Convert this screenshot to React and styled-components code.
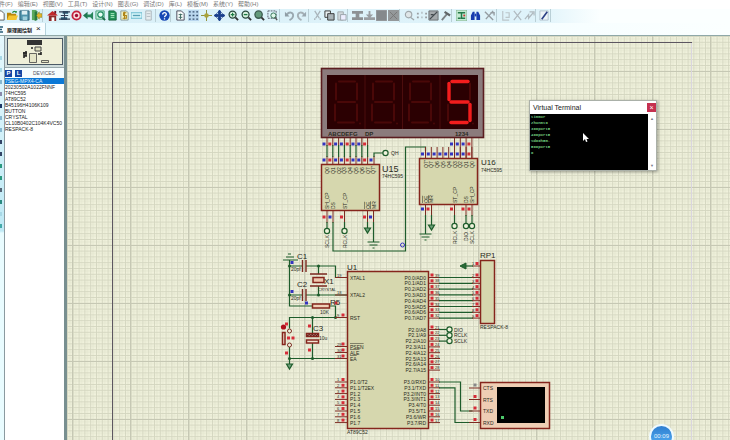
import React from 'react';
import styled, { createGlobalStyle } from 'styled-components';

const GlobalStyle = createGlobalStyle`
  * {
    box-sizing: border-box;
  }

  body {
    margin: 0;
    overflow: hidden;
    font-family: 'Liberation Sans', 'Noto Sans CJK SC', sans-serif;
    font-size: 6px;
    color: #222;
  }

  button {
    font: inherit;
    color: inherit;
    padding: 0;
    border: 0;
    background: none;
  }
`;

const Page = styled.div`
  height: 100vh;
  display: flex;
  flex-direction: column;
  background: #fff;
`;

const MenuBar = styled.nav`
  display: flex;
  gap: 5px;
  height: 9px;
  margin-left: -7px;
  overflow: hidden;
  white-space: nowrap;
`;

const MenuItem = styled.button`
  height: 9px;
  line-height: 9px;
  color: #777;
`;

const Toolbar = styled.div`
  display: flex;
  gap: 3px;
  height: 14px;
  padding-bottom: 1px;
  background: linear-gradient(to right, #d9f0f8 0, #dff3fa 540px, #fbffff 600px);
`;

const ToolGroup = styled.div`
  display: flex;
  align-items: center;
  justify-content: space-around;
  width: ${(props) => props.$width}px;
  flex-shrink: 0;
  border-right: 1px solid #b9cfd6;

  &:first-child {
    margin-left: -6px;
  }
`;

const ToolButton = styled.button`
  display: flex;
  width: 11px;
  height: 12px;
  align-items: center;
  justify-content: center;
`;

const TabBar = styled.div`
  display: flex;
  align-items: stretch;
  height: 13px;
  background: linear-gradient(to right, #e4f9ff, #f2fdff 400px, #fbffff);
  border-bottom: 1px solid #8fa8a8;
`;

const Tab = styled.div`
  display: flex;
  align-items: center;
  gap: 4px;
  width: 46px;
  background: #f7fdff;
  border-right: 1px solid #b4d2dc;
  white-space: nowrap;
  color: #111;
  font-weight: 700;
  font-size: 5px;
`;

const CloseTab = styled.button`
  font-size: 8px;
  font-weight: 400;
  line-height: 8px;
`;

const Body = styled.main`
  flex: 1;
  min-height: 0;
  display: flex;
`;

const ModeStrip = styled.div`
  width: 5px;
  flex-shrink: 0;
  display: flex;
  flex-direction: column;
  background: linear-gradient(#e5f8fd, #bfe9f5 195px, #e9fcff 197px);
  border-right: 1px solid #8b9aa0;
  overflow: hidden;
`;

const ModeButton = styled.button`
  height: 4px;
  width: 2px;
  margin-top: 8px;
  flex-shrink: 0;
  background: ${(props) => props.$tone};
`;

const Sidebar = styled.aside`
  width: 62px;
  flex-shrink: 0;
  border-right: 3px solid #788f90;
  background: #fff;
`;

const Overview = styled.div`
  padding: 2px 1px 1px 2px;
  height: 31px;
  background: #cfdcdc;
`;

const DevicesHeader = styled.div`
  display: flex;
  align-items: center;
  gap: 3px;
  height: 11px;
  background: #f5fcfe;
  border-top: 1px solid #98a8ac;
`;

const PickButton = styled.button`
  width: 7px;
  height: 7px;
  line-height: 7px;
  background: #1546a5;
  color: #fff;
  font-weight: 700;
`;

const DevicesTitle = styled.span`
  margin-left: 8px;
  color: #556;
  font-size: 5px;
`;

const DeviceList = styled.ul`
  margin: 0;
  padding: 0;
  list-style: none;
`;

const Device = styled.li`
  height: 6px;
  line-height: 6px;
  font-size: 5px;
  white-space: nowrap;
  overflow: hidden;
  color: ${(props) => (props.$selected ? '#e8f6ff' : '#222')};
  background: ${(props) => (props.$selected ? '#0b78d6' : 'transparent')};
`;

const Canvas = styled.section`
  position: relative;
  flex: 1;
  min-width: 0;
  overflow: hidden;
`;

const Sheet = styled.svg`
  display: block;
  width: 100%;
  height: 100%;
  font-family: 'Liberation Sans', sans-serif;
`;

const TerminalWindow = styled.div`
  position: absolute;
  left: 462px;
  top: 64px;
  width: 128px;
  background: #fff;
  border: 1px solid #aab0a8;
  box-shadow: 1px 1px 3px rgba(0, 0, 0, 0.35);
`;

const TerminalTitle = styled.div`
  display: flex;
  align-items: center;
  justify-content: space-between;
  height: 13px;
  padding-left: 3px;
  font-size: 7px;
`;

const CloseWindow = styled.button`
  width: 9px;
  height: 9px;
  line-height: 8px;
  background: #c5304f;
  color: #fff;
  font-size: 7px;
`;

const TerminalBody = styled.div`
  display: flex;
  height: 56px;
`;

const TerminalScreen = styled.pre`
  flex: 1;
  margin: 0;
  padding-left: 1px;
  background: #000;
  color: #6fc77d;
  font-family: 'Liberation Mono', monospace;
  font-size: 4px;
  font-weight: 700;
  line-height: 6px;
`;

const ScrollTrack = styled.div`
  display: flex;
  flex-direction: column;
  justify-content: space-between;
  align-items: center;
  width: 8px;
  padding: 2px 0;
  font-size: 4px;
  line-height: 5px;
  color: #778;
`;

const Pointer = styled.svg`
  position: absolute;
  left: 53px;
  top: 32px;
  width: 6px;
  height: 10px;
`;

const TimeBadge = styled.div`
  position: absolute;
  right: 56px;
  bottom: -9px;
  width: 25px;
  height: 25px;
  line-height: 20px;
  border: 2px solid #eefaff;
  border-radius: 50%;
  background: linear-gradient(#2f7fd0, #55b0f5);
  color: #e6f5ff;
  text-align: center;
`;

const MapFrame = styled.svg`
  display: block;
  width: 56px;
  height: 27px;
`;

const menus = [
  '文件(F)',
  '编辑(E)',
  '视图(V)',
  '工具(T)',
  '设计(N)',
  '图表(G)',
  '调试(D)',
  '库(L)',
  '模板(M)',
  '系统(Y)',
  '帮助(H)',
];

const devices = [
  '7SEG-MPX4-CA',
  '20230502A1022FNNF',
  '74HC595',
  'AT89C52',
  'B45196H4106K109',
  'BUTTON',
  'CRYSTAL',
  'CL10B0402C104K4VC50',
  'RESPACK-8',
];

const modeTones = [
  '#e4f4fa', '#a8d8e6', '#a8d8e6', '#88b8d0', '#88a', '#1b3768', '#88b8d0', '#88b8d0', '#346',
  '#346', '#2a9a80', '#2a9a80', '#567', '#2a8a80', '#a8d8e6', '#4aa',
];

const line = (d, color, width = 1.4) => <path d={d} fill="none" stroke={color} strokeWidth={width} />;

// every glyph is drawn on a 12x12 grid
const glyphs = {
  new: <path d="M2 1h5l3 3v7H2z" fill="#fff" stroke="#555" />,
  open: (
    <>
      <path d="M0 3h4l1 1h5v7H0z" fill="#b8860b" />
      <path d="M2 6h10l-2 5H0z" fill="#f4c430" />
      {line('M6 3c1-2 3-2 4 0M10 3V1', '#238a3d')}
    </>
  ),
  save: (
    <>
      <path d="M1 1h10v10H1z" fill="#4f93ab" stroke="#2b5f77" />
      <path d="M3 1h6v4H3z" fill="#dceef2" />
      <path d="M4 7h5v4H4z" fill="#9fd0dd" />
    </>
  ),
  close: (
    <>
      <path d="M1 0h5v11H1z" fill="#5aa85e" />
      <path d="M4 2l3-1v10l-3 1z" fill="#2a7a3c" />
      <path d="M12 4v4H9v2L6 6l3-4v2z" fill="#e4b62a" stroke="#7a7a20" strokeWidth=".6" />
    </>
  ),
  home: (
    <>
      <path d="M2 6h8v6H2z" fill="#8d2a2a" />
      <path d="M0 6l6-5 6 5z" fill="#c3292c" />
      <path d="M8 1h2v3H8z" fill="#712" />
      <path d="M5 8h3v4H5z" fill="#fff" />
    </>
  ),
  schematic: (
    <>
      <path d="M4 1h6v3H4zM2 8h7v3H2z" fill="#275c78" />
      {line('M0 2h12M2 6h8M0 10h12M6 3v6', '#333f55', 1.2)}
    </>
  ),
  pcb: (
    <>
      <circle cx="6" cy="6" r="4.5" fill="#f8dede" stroke="#c4213d" strokeWidth="2" />
      <circle cx="6" cy="6" r="1.8" fill="#a10f35" />
    </>
  ),
  view3d: (
    <>
      <path d="M0 6l5-4v8z" fill="#1f7551" />
      <path d="M4 5h4l3-3v9L8 8H4z" fill="#27865a" />
    </>
  ),
  gerber: (
    <>
      <path d="M1 1h9v9H1z" fill="#c8efdc" stroke="#3b9c72" />
      <circle cx="6" cy="5" r="3" fill="#e9fff5" stroke="#1d8a62" strokeWidth="1.3" />
      {line('M8 8l3 3', '#1d6a4a', 2)}
    </>
  ),
  design: (
    <>
      <path d="M2 1h6l2 2v8H2z" fill="#23935a" stroke="#17643d" />
      {line('M4 4h4M4 6h4M4 8h4', '#b7f0c9', 1)}
    </>
  ),
  bom: (
    <>
      <path d="M2 1h6l2 2v8H2z" fill="#eef0c4" stroke="#899" />
      {line('M8 3H5v3h3v3H4M6 2v8', '#b08518', 1.3)}
    </>
  ),
  code: (
    <>
      <path d="M0 3h12v6H0z" fill="#d8f6fa" stroke="#63b6cc" />
      {line('M2 6h8', '#58a0b6', 1.5)}
    </>
  ),
  note: (
    <>
      <path d="M3 1h6v10H3z" fill="#e6edf0" stroke="#aab5ba" />
      {line('M4 4h4M4 7h4', '#b0bac0', 1)}
    </>
  ),
  help: (
    <>
      <circle cx="6" cy="6" r="5.6" fill="#1747b4" />
      {line('M4 5c0-3 4-3 4 0c0 1-2 1-2 3M6 9v1.3', '#fff')}
    </>
  ),
  redraw: (
    <>
      <path d="M2 1h5l3 3v7H2z" fill="#f6fafa" stroke="#445" />
      {line('M4 5h4M4 8h4M6 4v6', '#3b6a60', 1)}
    </>
  ),
  grid: (
    <>
      <path d="M0 0h12v12H0z" fill="#b9d6ee" />
      <path d="M1 2h10M1 6h10M1 10h10" stroke="#37506f" strokeWidth="1.5" strokeDasharray="2 2" />
    </>
  ),
  origin: (
    <>
      {line('M6 0v12M0 6h12', '#8c8a2d', 1)}
      <circle cx="6" cy="6" r="2.5" fill="#a9a23a" />
    </>
  ),
  pan: <path d="M6 0l2 3H7v2h2V4l3 2-3 2V7H7v2h1l-2 3-2-3h1V7H3v1L0 6l3-2v1h2V3H4z" fill="#1b3f8c" stroke="#1b3f8c" />,
  zoomIn: (
    <>
      <circle cx="5" cy="5" r="3.8" fill="#d8f0df" stroke="#27463b" strokeWidth="1.4" />
      {line('M3 5h4M5 3v4', '#1b7a42', 1.2)}
      {line('M8 8l3 3', '#333', 2)}
    </>
  ),
  zoomOut: (
    <>
      <circle cx="5" cy="5" r="3.8" fill="#d8f0df" stroke="#27463b" strokeWidth="1.4" />
      {line('M3 5h4', '#1b7a42')}
      {line('M8 8l3 3', '#333', 2)}
    </>
  ),
  zoomAll: (
    <>
      <circle cx="5" cy="5" r="4" fill="#649a7c" stroke="#3b5a4e" strokeWidth="1.4" />
      {line('M8 8l3 3', '#333', 2)}
    </>
  ),
  zoomArea: (
    <>
      <path d="M1 1h9v8H1z" fill="none" stroke="#556" strokeDasharray="2 1" />
      <circle cx="7" cy="6" r="2.8" fill="#dff5e8" stroke="#2d6d50" />
      {line('M9 8l2 3', '#555', 1.6)}
    </>
  ),
  undo: (
    <>
      {line('M3 5c3-4 7-2 7 1c0 3-2 4-4 5', '#9aa8b0', 2)}
      <path d="M1 2v5h5z" fill="#8f9ea6" />
    </>
  ),
  redo: (
    <>
      {line('M9 5C6 1 2 3 2 6c0 3 2 4 4 5', '#a5b0b6', 2)}
      <path d="M11 2v5H6z" fill="#9aa8b0" />
    </>
  ),
  cut: line('M3 1l5 8M9 1L4 9M3 9v2M9 9v2', '#a9b4ba'),
  copy: (
    <>
      <path d="M1 1h6v7H1z" fill="#e8eef0" stroke="#333" />
      <path d="M4 4h7v7H4z" fill="#aab4b8" stroke="#333" />
    </>
  ),
  paste: (
    <>
      <path d="M2 2h6v9H2z" fill="#d0d8dc" stroke="#a0a8ac" />
      <path d="M5 5h6v6H5z" fill="#eef" stroke="#98a2a8" />
    </>
  ),
  blockCopy: <path d="M0 1h12v3H8v4h4v3H0V8h4V4H0z" fill="#8d9194" />,
  blockMove: <path d="M0 8h12v3H0zM5 1h2v4h3L6 9 2 5h3z" fill="#9a9ea2" />,
  blockRotate: <path d="M0 0h12v12H0z" fill="#85898c" stroke="#a5a9ac" />,
  blockDelete: (
    <>
      <path d="M0 0h12v12H0z" fill="#94989a" />
      {line('M2 2l8 8M10 2l-8 8', '#777', 1)}
    </>
  ),
  pick: (
    <>
      <circle cx="5" cy="5" r="3.5" fill="#dfe6e8" stroke="#a0a8ac" strokeWidth="1.3" />
      {line('M7 8l4 3', '#a0a8ac')}
    </>
  ),
  make: line('M1 4h2M1 8h2M6 3h1M6 8h1M10 4h2M10 8h2', '#9a9ea2', 2),
  pack: (
    <>
      <path d="M1 1h10v10H1z" fill="#a4a9ac" stroke="#6a7074" />
      {line('M2 10l8-8M3 5h3', '#444b4f')}
    </>
  ),
  hammer: (
    <>
      {line('M2 11l6-7', '#7c8286', 2)}
      {line('M5 2l6 4', '#606568', 2.4)}
    </>
  ),
  wire: (
    <>
      <path d="M0 0h12v12H0z" fill="#c4ead2" stroke="#7faf8e" />
      {line('M2 3h4v6h4M6 3h4M2 9h3', '#24794a', 1.6)}
      {line('M9 5v2', '#c33', 2)}
    </>
  ),
  find: (
    <>
      <path d="M1 11V6l2-4h2v9zM7 11V2h2l2 4v5z" fill="#173cae" />
      <path d="M5 4h2v3H5z" fill="#173cae" />
    </>
  ),
  property: line('M1 2l9 9M10 1L2 10M7 3h4v3', '#959da2', 1.5),
  newSheet: line('M3 1v10h7M6 3h4v5H6', '#bcc6ca', 1.3),
  delSheet: line('M2 1l8 10M10 1L2 11', '#b0babf', 1.3),
  exitSheet: line('M1 10l4-5v4l5-6M6 2h5v4', '#b0babf', 1.3),
  erc: (
    <>
      <path d="M1 1h9v10H1z" fill="#eef4f8" stroke="#b2c2cc" />
      {line('M3 10l6-8', '#2c3f85', 1.8)}
    </>
  ),
};

const toolGroups = [
  { width: 49, tools: ['new', 'open', 'save', 'close'] },
  { width: 110, tools: ['home', 'schematic', 'pcb', 'view3d', 'gerber', 'design', 'bom', 'code', 'note'] },
  { width: 12, tools: ['help'] },
  { width: 106, tools: ['redraw', 'grid', 'origin', 'pan', 'zoomIn', 'zoomOut', 'zoomAll', 'zoomArea'] },
  { width: 26, tools: ['undo', 'redo'] },
  { width: 36, tools: ['cut', 'copy', 'paste'] },
  { width: 49, tools: ['blockCopy', 'blockMove', 'blockRotate', 'blockDelete'] },
  { width: 49, tools: ['pick', 'make', 'pack', 'hammer'] },
  { width: 42, tools: ['wire', 'find', 'property'] },
  { width: 36, tools: ['newSheet', 'delSheet', 'exitSheet'] },
  { width: 12, tools: ['erc'] },
];

const RED = '#d62c38';
const BLUE = '#3434c0';
const WIRE = '#1d5c2b';
const PIN = '#7c2a22';
const BODY = '#d6d7ae';
const INK = '#2b2b22';

const Wire = ({ d }) => <path d={d} fill="none" stroke={WIRE} strokeWidth="1.2" />;
const Pin = ({ d }) => <path d={d} fill="none" stroke={PIN} />;
const Dot = ({ x, y, color = RED }) => <rect x={x - 1.5} y={y - 1.5} width="3" height="3" fill={color} />;
const Node = ({ x, y }) => <circle cx={x} cy={y} r="1.5" fill={WIRE} />;
const Port = ({ x, y }) => <circle cx={x} cy={y} r="2.6" fill="#eff2dc" stroke={WIRE} strokeWidth="1.2" />;
const Chip = ({ x, y, w, h, fill = BODY }) => (
  <rect x={x} y={y} width={w} height={h} fill={fill} stroke="#85251c" strokeWidth="1.5" />
);
const Txt = ({ x, y, size = 5, children, ...rest }) => (
  <text x={x} y={y} fontSize={size} fill={INK} {...rest}>
    {children}
  </text>
);
const VTxt = ({ x, y, children, ...rest }) => (
  <text transform={`translate(${x + 2} ${y}) rotate(-90)`} fontSize="5" fill={INK} {...rest}>
    {children}
  </text>
);
const Arrow = ({ x, y }) => (
  <path d={`M${x - 3} ${y}h6l-3 5z`} fill="#6ea07a" stroke={WIRE} strokeWidth="1.2" />
);
const Ground = ({ x, y }) => (
  <path d={`M${x - 6} ${y}h12M${x - 4} ${y + 3}h8M${x - 1} ${y + 6}h2`} stroke={WIRE} fill="none" />
);

const pitch = 5.8;
const steps = (n) => Array.from({ length: n }, (_, i) => i);

const segments = {
  a: 'M5 0H21',
  b: 'M23 2V18',
  c: 'M23 23V39',
  d: 'M4 41H20',
  e: 'M1 23V39',
  f: 'M2 2V18',
  g: 'M4 20.5H21',
};

const Digit = ({ x, lit = '' }) => (
  <g transform={`translate(${x} 81.5)`} strokeLinecap="round" fill="none">
    {Object.keys(segments).map((key) => (
      <path
        key={key}
        d={segments[key]}
        stroke={lit.includes(key) ? '#f21d1d' : '#4a0808'}
        strokeWidth={lit.includes(key) ? 3.4 : 2}
      />
    ))}
    <circle cx="26" cy="42" r="1" fill="#4a0808" />
  </g>
);

const Display = () => (
  <g>
    <rect x="321.5" y="68.5" width="162" height="69" fill="#8b7b7c" stroke="#5b1d20" strokeWidth="1.6" />
    <rect x="327" y="75" width="151" height="54" fill="#2b0002" />
    <path d="M365 75v54M402.5 75v54M440 75v54" stroke="#4c0d0d" />
    <Digit x={334} />
    <Digit x={371} />
    <Digit x={408} />
    <Digit x={447} lit="afgcd" />
    <Txt x={328} y={136} size={6} fontWeight="700">
      ABCDEFG
    </Txt>
    <Txt x={365} y={136} size={6} fontWeight="700">
      DP
    </Txt>
    <Txt x={455} y={136} size={6} fontWeight="700">
      1234
    </Txt>
    {steps(8).map((i) => (
      <g key={i}>
        <Pin d={`M${327 + i * pitch} 138v8m0 10v8`} />
        <Wire d={`M${327 + i * pitch} 145v12`} />
        <Dot x={324 + i * pitch} y={144} color={[1, 4, 7].includes(i) ? RED : BLUE} />
        <Dot x={324 + i * pitch} y={160} color={[1, 4, 7].includes(i) ? RED : BLUE} />
      </g>
    ))}
    {steps(4).map((i) => (
      <g key={i}>
        <Pin d={`M${454.5 + i * pitch} 138v20`} />
        <Dot x={451.5 + i * pitch} y={144} color={i === 3 ? RED : BLUE} />
      </g>
    ))}
  </g>
);

const outputs = ['Q0', 'Q1', 'Q2', 'Q3', 'Q4', 'Q5', 'Q6', 'Q7', "Q7'"];

const ShiftRegisters = () => (
  <g>
    <Chip x={321.5} y={164.5} w={58} h={46} />
    {outputs.map((name, i) => (
      <VTxt key={name} x={327 + i * pitch} y={174}>
        {name}
      </VTxt>
    ))}
    <Pin d="M374 164v-8" />
    <Wire d="M374 157v-4h9" />
    <Dot x={371} y={160} color={BLUE} />
    <Port x={385.5} y={153} />
    <Txt x={391} y={155}>QH</Txt>
    <VTxt x={327} y={209}>SH_CP</VTxt>
    <VTxt x={333} y={209}>DS</VTxt>
    <VTxt x={344.5} y={209}>ST_CP</VTxt>
    <VTxt x={367.5} y={209} textDecoration="overline">OE</VTxt>
    <VTxt x={373.5} y={209} textDecoration="overline">MR</VTxt>
    <Pin d="M327 211v12M333 211v12M344.5 211v12M367.5 211v12M373.5 211v12" />
    <Wire d="M327 222v7M344.5 222v7M367.5 222v6M373.5 222v20M333 222v29h72.5V147h20v4" />
    {[324, 330, 341.5, 364.5, 370.5].map((x, i) => (
      <Dot key={x} x={x} y={217} color={i === 1 || i === 4 ? BLUE : RED} />
    ))}
    <Port x={327} y={231} />
    <Port x={344.5} y={231} />
    <VTxt x={327} y={248}>SCLK</VTxt>
    <VTxt x={344.5} y={248}>RCLK</VTxt>
    <Arrow x={367.5} y={228} />
    <Ground x={373.5} y={242} />
    <circle cx="402.5" cy="245" r="2" fill="none" stroke={BLUE} />
    <Txt x={382} y={172} size={9}>U15</Txt>
    <Txt x={382} y={178}>74HC595</Txt>

    <Chip x={419.5} y={158.5} w={58} h={46} />
    {outputs.map((name, i) => (
      <g key={name}>
        <VTxt x={425.5 + i * pitch} y={168}>
          {outputs[8 - i]}
        </VTxt>
        <Pin d={`M${425.5 + i * pitch} 158v-11`} />
        <Dot x={422.5 + i * pitch} y={154} color={i > 7 ? RED : BLUE} />
      </g>
    ))}
    <VTxt x={425.5} y={203} textDecoration="overline">OE</VTxt>
    <VTxt x={431} y={203} textDecoration="overline">MR</VTxt>
    <VTxt x={454.5} y={203}>ST_CP</VTxt>
    <VTxt x={466} y={203}>DS</VTxt>
    <VTxt x={472} y={203}>SH_CP</VTxt>
    <Pin d="M425.5 205v11M431.5 205v11M454.5 205v11M466 205v11M472 205v11" />
    <Wire d="M425.5 215v19M431.5 215v10M454.5 215v9M466 215v9M472 215v9" />
    {[422.5, 428, 451.5, 463, 469].map((x, i) => (
      <Dot key={x} x={x} y={209} color={i === 0 ? BLUE : RED} />
    ))}
    <Port x={454.5} y={226} />
    <Port x={466} y={226} />
    <Port x={472} y={226} />
    <VTxt x={454.5} y={244}>RCLK</VTxt>
    <VTxt x={466} y={241}>DIO</VTxt>
    <VTxt x={472} y={244}>SCLK</VTxt>
    <Arrow x={431.5} y={225} />
    <Ground x={425.5} y={234} />
    <Txt x={481} y={165} size={8}>U16</Txt>
    <Txt x={481} y={172}>74HC595</Txt>
  </g>
);

const leftPins = [
  ['XTAL1', 277.5, 19],
  ['XTAL2', 295, 18],
  ['RST', 317.5, 9],
  ['PSEN', 346.5, 29, true],
  ['ALE', 352.5, 30, true],
  ['EA', 358.5, 31, true],
  ...['P1.0/T2', 'P1.1/T2EX', 'P1.2', 'P1.3', 'P1.4', 'P1.5', 'P1.6', 'P1.7'].map((n, i) => [
    n,
    382 + i * pitch,
    i + 1,
  ]),
];

const rightPins = [
  ...steps(8).map((i) => [`P0.${i}/AD${i}`, 277.5 + i * pitch, 39 - i]),
  ...steps(8).map((i) => [`P2.${i}/A${8 + i}`, 329.5 + i * pitch, 21 + i]),
  ...['RXD', 'TXD', 'INT0', 'INT1', 'T0', 'T1', 'WR', 'RD'].map((n, i) => [`P3.${i}/${n}`, 382 + i * pitch, 10 + i]),
];

const Controller = () => (
  <g>
    <Chip x={347.5} y={271.5} w={81} h={157} />
    <Txt x={347} y={270} size={8}>U1</Txt>
    <Txt x={347} y={434}>AT89C52</Txt>
    {leftPins.map(([name, y, num, over], i) => (
      <g key={name}>
        <Pin d={`M335 ${y}h12`} />
        {i > 2 && <Dot x={343} y={y - 2.5} />}
        <Txt x={337} y={y - 1} size={4}>{num}</Txt>
        <Txt x={350} y={y + 2} textDecoration={over ? 'overline' : undefined}>
          {name}
        </Txt>
      </g>
    ))}
    {rightPins.map(([name, y, num]) => (
      <g key={name}>
        <Pin d={`M429 ${y}h11`} />
        <Dot x={432} y={y - 2.5} />
        <Txt x={435} y={y - 1} size={4}>{num}</Txt>
        <Txt x={426} y={y + 2} textAnchor="end">
          {name}
        </Txt>
      </g>
    ))}
  </g>
);

const Oscillator = () => (
  <g>
    <path d="M283 260h15M286 257h8M288 254h3" stroke={WIRE} fill="none" />
    <Wire d="M289.5 260v46h23M289.5 266h13M306 266h29.5v11.5h12M289.5 295h13M306 295h41M318.5 266v8M318.5 286v9M330 306h5.5v11.5M347 317.5h-57.5v11M312.5 317.5v16M312.5 343v15.5M289.5 347v17M289.5 358.5h58" />
    <path d="M302.5 260v12M306 260v12M302.5 289v12M306 289v12M310 274h17M310 286h17" stroke={PIN} strokeWidth="1.4" />
    <Chip x={313} y={277.5} w={11} h={5} fill="#efc9b0" />
    <Chip x={312.5} y={304} w={17} h={4} fill="#efd0b8" />
    <Chip x={306.5} y={333.5} w={12} h={3} fill="#b0746a" />
    <path d="M307 336l3-2M310 336l3-2M313 336l3-2M316 336l2-2" stroke="#5d1e1c" />
    <Chip x={306.5} y={340} w={12} h={3} fill="#f1e3d0" />
    <Chip x={282.5} y={332.5} w={2.5} h={12} fill="#f1e3d0" />
    <circle cx="289.5" cy="331" r="2" fill="#eff2dc" stroke={PIN} />
    <circle cx="289.5" cy="345" r="2" fill="#eff2dc" stroke={PIN} />
    <circle cx="283.5" cy="327" r="2.6" fill="#b0101c" />
    <Arrow x={289.5} y={364} />
    {[[289.5, 266], [318.5, 266], [289.5, 295], [318.5, 295], [312.5, 317.5], [335.5, 317.5], [312.5, 358.5], [289.5, 358.5]].map(
      ([x, y]) => (
        <Node key={`${x}-${y}`} x={x} y={y} />
      )
    )}
    {[[286.5, 324], [309.5, 326], [309.5, 350], [286.5, 353], [288.5, 338], [293, 338], [336, 303], [343, 315]].map(([x, y]) => (
      <Dot key={`${x}-${y}`} x={x} y={y} />
    ))}
    <Dot x={292} y={262.5} color={BLUE} />
    <Dot x={292} y={291.5} color={BLUE} />
    <Dot x={306.5} y={303} color={BLUE} />
    <Txt x={297} y={259} size={8}>C1</Txt>
    <Txt x={297} y={287} size={8}>C2</Txt>
    <Txt x={291} y={271}>20pf</Txt>
    <Txt x={291} y={300}>20pf</Txt>
    <Txt x={324} y={284} size={8}>X1</Txt>
    <Txt x={318} y={291} size={4}>CRYSTAL</Txt>
    <Txt x={330} y={305} size={8}>R5</Txt>
    <Txt x={320} y={314}>10K</Txt>
    <Txt x={313} y={331} size={8}>C3</Txt>
    <Txt x={319} y={340}>10u</Txt>
  </g>
);

const Peripherals = () => (
  <g>
    {steps(8).map((i) => (
      <g key={i}>
        <Wire d={`M439 ${277.5 + i * pitch}h34`} />
        <Pin d={`M472 ${277.5 + i * pitch}h8`} />
        <Dot x={477} y={275 + i * pitch} />
        <Txt x={472} y={277 + i * pitch} size={4}>{i + 2}</Txt>
      </g>
    ))}
    <Chip x={480.5} y={260.5} w={14} h={63} />
    <Pin d="M472 266h8" />
    <Wire d="M465 266h8" />
    <path d="M466 263v6l-6-3z" fill="#2a6a38" stroke={WIRE} />
    <Dot x={477} y={263.5} />
    <Txt x={472} y={265} size={4}>1</Txt>
    <Txt x={480} y={258} size={8}>RP1</Txt>
    <Txt x={480} y={329}>RESPACK-8</Txt>

    {['DIO', 'RCLK', 'SCLK'].map((name, i) => (
      <g key={name}>
        <Wire d={`M439 ${329.5 + i * pitch}h8`} />
        <Port x={449.5} y={329.5 + i * pitch} />
        <Txt x={454} y={331.5 + i * pitch}>{name}</Txt>
      </g>
    ))}

    <Wire d="M439 382h21.5v29h12M439 387.8h16v34.7h18" />
    <Chip x={480.5} y={382.5} w={69} h={46} fill="#efceb4" />
    <rect x="497" y="387" width="48" height="36" fill="#000" />
    <rect x="501" y="416" width="3" height="3" fill="#4cc76a" />
    {['CTS', 'RTS', 'TXD', 'RXD'].map((name, i) => (
      <g key={name}>
        <Pin d={`M469 ${388 + i * 11.5}h11`} />
        <Dot x={475} y={385 + i * 11.5} color={i === 0 ? '#888' : RED} />
        <Txt x={483} y={390 + i * 11.5}>{name}</Txt>
      </g>
    ))}
  </g>
);

const Schematic = () => (
  <Sheet>
    <defs>
      <pattern id="fine" width="5.8" height="5.8" patternUnits="userSpaceOnUse">
        <rect width="5.8" height="5.8" fill="#f0f1dc" />
        <path d="M0 2.9h5.8M2.9 0v5.8" stroke="#e2e4ce" strokeWidth="0.8" />
        <path d="M0 .5h5.8M.5 0v5.8" stroke="#d3d5bf" strokeWidth="0.9" />
      </pattern>
      <pattern id="coarse" width="58" height="58" x="5" y="35" patternUnits="userSpaceOnUse">
        <path d="M0 .5h58M.5 0v58" stroke="#c6c8b4" />
      </pattern>
    </defs>
    <rect width="100%" height="100%" fill="url(#fine)" />
    <rect width="100%" height="100%" fill="url(#coarse)" />
    <g transform="translate(-67 -36)">
      <path d="M692 42.5H112.5V900" fill="none" stroke="#5c5660" />
      <path d="M691.5 43v900" stroke="#d9d5de" />
      <Display />
      <ShiftRegisters />
      <Oscillator />
      <Controller />
      <Peripherals />
    </g>
  </Sheet>
);

const OverviewMap = () => (
  <MapFrame viewBox="0 0 56 27">
    <rect x=".5" y=".5" width="55" height="26" fill="#efefd9" stroke="#4b5a66" />
    <path d="M20 2h15v5H20z" fill="#333" />
    <path d="M28 9h6v4h-6z" fill="#dfdfc0" stroke="#444" />
    <path d="M22.5 15.5h7v9h-7zM34.5 22.5h7v2h-7z" fill="#e5e5c8" stroke="#444" strokeWidth=".8" />
    <path d="M16 15h4M17 18h3M17 14v6M19 13v5M31 16h3M34 14v3M24 10h2" stroke="#222" strokeWidth="1.6" />
  </MapFrame>
);

const VirtualTerminal = () => (
  <TerminalWindow>
    <TerminalTitle>
      Virtual Terminal
      <CloseWindow aria-label="Close">×</CloseWindow>
    </TerminalTitle>
    <TerminalBody>
      <TerminalScreen>{'timmor\nzhonmt0\n300port5\n400port5\n%d00h5m.\n500port5\n0'}</TerminalScreen>
      <ScrollTrack>
        <span>▲</span>
        <span>▼</span>
      </ScrollTrack>
    </TerminalBody>
    <Pointer viewBox="0 0 6 10">
      <path d="M0 0v8l2-2 1 3 1.5-.5L3.500 6H6z" fill="#fff" />
    </Pointer>
  </TerminalWindow>
);

const App = () => {
  return (
    <Page>
      <GlobalStyle />
      <MenuBar>
        {menus.map((menu) => (
          <MenuItem key={menu}>{menu}</MenuItem>
        ))}
      </MenuBar>
      <Toolbar>
        {toolGroups.map((group) => (
          <ToolGroup key={group.tools[0]} $width={group.width}>
            {group.tools.map((tool) => (
              <ToolButton key={tool} aria-label={tool}>
                <svg width="11" height="11" viewBox="0 0 12 12">
                  {glyphs[tool]}
                </svg>
              </ToolButton>
            ))}
          </ToolGroup>
        ))}
      </Toolbar>
      <TabBar>
        <Tab>
          <svg width="3" height="7" viewBox="0 0 3 7">
            <path d="M0 1h3M0 3.5h2M0 6h3" stroke="#275c78" strokeWidth="1.5" />
          </svg>
          原理图绘制
          <CloseTab aria-label="Close tab">×</CloseTab>
        </Tab>
      </TabBar>
      <Body>
        <ModeStrip>
          {modeTones.map((tone, i) => (
            <ModeButton key={i} $tone={tone} aria-label={`Mode ${i + 1}`} />
          ))}
        </ModeStrip>
        <Sidebar>
          <Overview>
            <OverviewMap />
          </Overview>
          <DevicesHeader>
            <PickButton>P</PickButton>
            <PickButton>L</PickButton>
            <DevicesTitle>DEVICES</DevicesTitle>
          </DevicesHeader>
          <DeviceList>
            {devices.map((device, i) => (
              <Device key={device} $selected={i === 0}>
                {device}
              </Device>
            ))}
          </DeviceList>
        </Sidebar>
        <Canvas>
          <Schematic />
          <VirtualTerminal />
          <TimeBadge>00:09</TimeBadge>
        </Canvas>
      </Body>
    </Page>
  );
};

export default App;
